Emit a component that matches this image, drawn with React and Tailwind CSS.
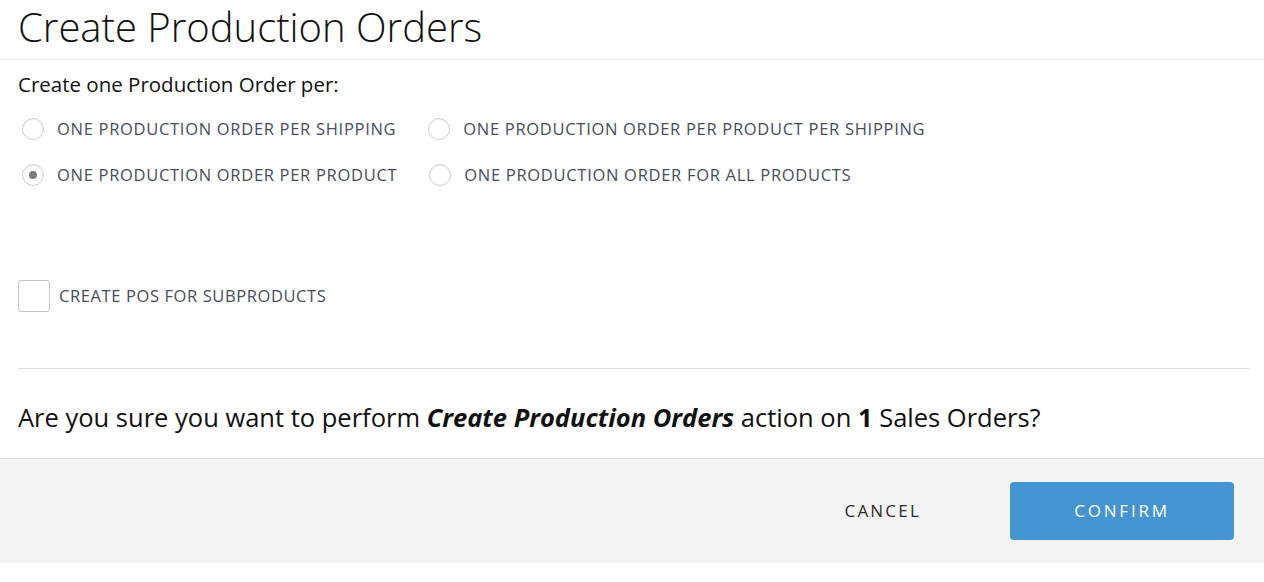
import React from 'react';

const options = [
  [
    { label: 'ONE PRODUCTION ORDER PER SHIPPING', checked: false },
    { label: 'ONE PRODUCTION ORDER PER PRODUCT PER SHIPPING', checked: false },
  ],
  [
    { label: 'ONE PRODUCTION ORDER PER PRODUCT', checked: true },
    { label: 'ONE PRODUCTION ORDER FOR ALL PRODUCTS', checked: false },
  ],
];

const Radio = ({ label, checked }) => (
  <label className="flex items-center mr-[32px]">
    <span className="w-[22px] h-[22px] rounded-full border border-[#cfcfcf] shadow-[inset_0_1px_2px_rgba(0,0,0,0.08)] flex items-center justify-center bg-white">
      {checked && <span className="w-[8px] h-[8px] rounded-full bg-[#7a7a7a]" />}
    </span>
    <span className="ml-[13px] text-[16.5px] tracking-[0.7px] text-[#474d5c]">{label}</span>
  </label>
);

export default function App() {
  return (
    <div className="w-[1264px] h-[582px] bg-white font-['Open_Sans',sans-serif] overflow-hidden">
      {/* Header */}
      <div className="h-[60px] border-b border-[#ececec] px-[18px] flex items-center">
        <h1 className="text-[40px] font-light text-[#111] leading-none -mt-[6px]">Create Production Orders</h1>
      </div>

      {/* Body */}
      <div className="px-[18px]">
        <p className="mt-[11px] text-[20.5px] text-[#111] leading-[26px]">Create one Production Order per:</p>

        <div className="mt-[21px] ml-[4px] flex flex-col gap-[24px]">
          {options.map((row, i) => (
            <div key={i} className="flex items-center h-[22px]">
              {row.map((o) => (
                <Radio key={o.label} {...o} />
              ))}
            </div>
          ))}
        </div>

        <label className="mt-[94px] flex items-center">
          <span className="w-[32px] h-[32px] rounded-[3px] border border-[#c4c4c4] bg-white" />
          <span className="ml-[9px] text-[16.5px] tracking-[0.6px] text-[#474d5c]">CREATE POS FOR SUBPRODUCTS</span>
        </label>

        <div className="mt-[56px] border-t border-[#dedede] mr-[-4px]" />

        <p className="mt-[32px] text-[25.5px] text-[#111] leading-[32px]">
          Are you sure you want to perform <b className="italic font-bold">Create Production Orders</b> action on <b className="font-bold">1</b> Sales Orders?
        </p>
      </div>

      {/* Footer */}
      <div className="mt-[25px] h-[105px] border-t border-[#dcdcdc] bg-[#f4f4f4] flex items-center justify-end pr-[30px]">
        <button className="mr-[89px] text-[17px] tracking-[2.2px] text-[#2b2b2b] font-medium">CANCEL</button>
        <button className="w-[224px] h-[58px] rounded-[4px] bg-[#4494d2] text-white text-[17px] tracking-[2.8px] font-medium">
          CONFIRM
        </button>
      </div>
    </div>
  );
}
